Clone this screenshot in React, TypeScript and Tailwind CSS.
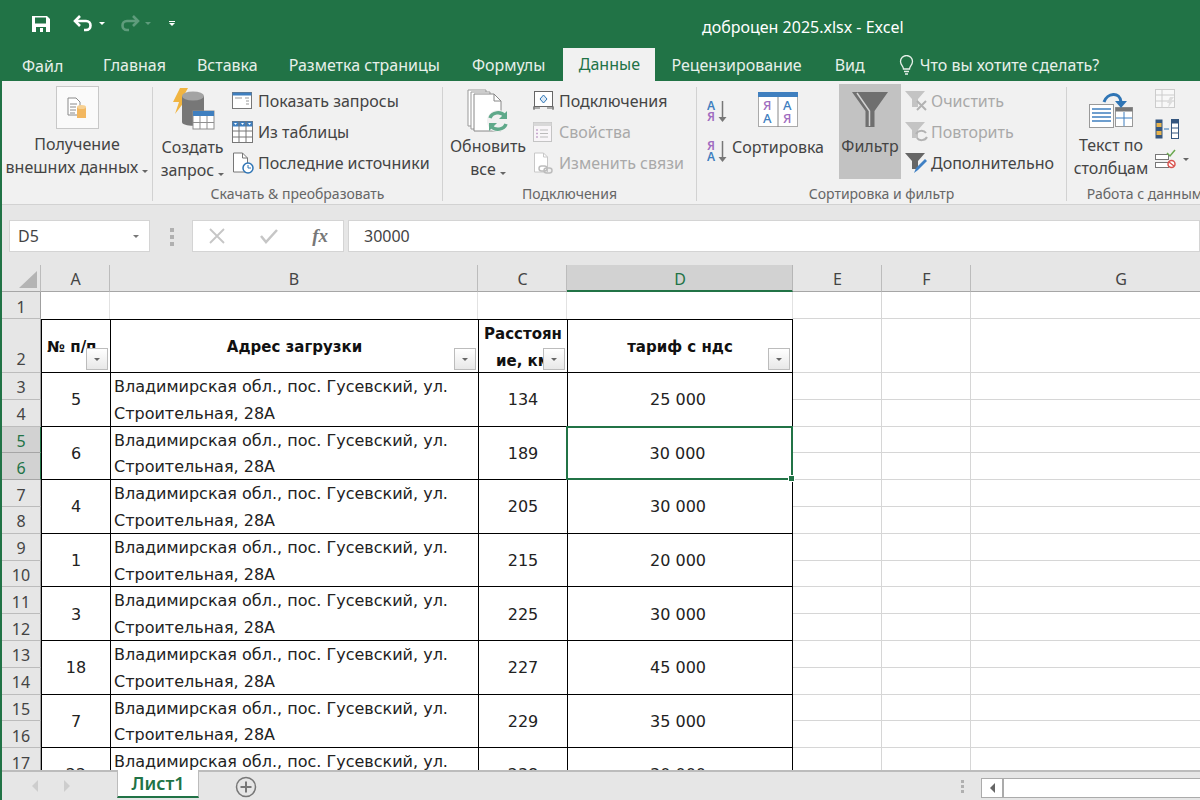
import type { ReactNode } from "react";

const rows = [
  { a: "5", c: "134", d: "25 000" },
  { a: "6", c: "189", d: "30 000" },
  { a: "4", c: "205", d: "30 000" },
  { a: "1", c: "215", d: "20 000" },
  { a: "3", c: "225", d: "30 000" },
  { a: "18", c: "227", d: "45 000" },
  { a: "7", c: "229", d: "35 000" },
  { a: "22", c: "238", d: "30 000" },
];

const Caret = ({ className = "border-t-[#666]" }: { className?: string }) => (
  <span className={`inline-block w-0 h-0 border-x-[3px] border-x-transparent border-t-[3px] ${className}`} />
);

const SaveIcon = () => (
  <svg width="18" height="18" viewBox="0 0 18 18">
    <path d="M0 1h15l3 3v13H0z" fill="#fff" />
    <rect x="3" y="2.5" width="11" height="6" fill="#217346" />
    <rect x="4" y="12" width="10" height="5" fill="#217346" />
    <rect x="8" y="13" width="3" height="4" fill="#fff" />
  </svg>
);

const UndoIcon = ({ stroke, flip }: { stroke: string; flip?: boolean }) => (
  <svg width="21" height="19" viewBox="0 0 21 19" className={flip ? "-scale-x-100" : ""}>
    <path d="M7 2 2 7l5 5" fill="none" stroke={stroke} strokeWidth="2.6" />
    <path d="M3 7h10c6 0 6 9 0 9h-2" fill="none" stroke={stroke} strokeWidth="2.6" />
  </svg>
);

const ExternalDataIcon = () => (
  <div className="w-[43px] h-[43px] bg-[#fafafa] border border-[#c8c8c8] flex items-center justify-center">
    <svg width="20" height="22" viewBox="0 0 20 22">
      <path d="M1 1h8l4 4v13H1z" fill="#fff" stroke="#8a8a8a" />
      <path d="M3 7h7M3 10h6M3 13h6M3 16h5" stroke="#8a8a8a" />
      <rect x="10" y="10" width="9" height="11" fill="#f2b760" />
      <ellipse cx="14.5" cy="10" rx="4.5" ry="2" fill="#f7d193" />
    </svg>
  </div>
);

const QueryIcon = () => (
  <svg width="46" height="42" viewBox="0 0 46 42">
    <path d="M10 0h8l-5 9h5L5 26l4-12H3z" fill="#f0b441" />
    <path d="M12 8h22v26c0 5-22 5-22 0z" fill="#777" />
    <ellipse cx="23" cy="8" rx="11" ry="4.5" fill="#a3a3a3" />
    <rect x="23" y="23" width="21" height="18" fill="#fff" stroke="#8f8f8f" />
    <rect x="23" y="23" width="21" height="5" fill="#3f7fbf" />
    <path d="M30 28v13M37 28v13M23 34.5h21" stroke="#8f8f8f" />
  </svg>
);

const ShowQueriesIcon = () => (
  <svg width="21" height="20" viewBox="0 0 21 20">
    <rect x="0.5" y="1.5" width="19" height="16" fill="#fff" stroke="#777" />
    <rect x="0.5" y="1.5" width="19" height="3" fill="#3f7fbf" />
    <path d="M3 7h7M13 7h4M3 10h0M14 10h3M14 13h3" stroke="#999" />
  </svg>
);

const FromTableIcon = () => (
  <svg width="22" height="22" viewBox="0 0 22 22">
    <rect x="0.5" y="0.5" width="20" height="21" fill="#fff" stroke="#777" />
    <rect x="0.5" y="0.5" width="20" height="5" fill="#3f7fbf" />
    <path d="M7 0v22M14 0v22M0 10h21M0 16h21" stroke="#777" />
    <path d="M2 2h3l-1.500 2zM9 2h3l-1.500 2zM16 2h3l-1.500 2z" fill="#fff" />
  </svg>
);

const RecentIcon = () => (
  <svg width="22" height="22" viewBox="0 0 22 22">
    <path d="M1.500 1h9l5 5v14h-14z" fill="#fff" stroke="#777" />
    <path d="M10.500 1v5h5" fill="none" stroke="#777" />
    <circle cx="16" cy="16" r="5" fill="#fff" stroke="#2f75b5" strokeWidth="1.500" />
    <path d="M16 13v3h3" fill="none" stroke="#2f75b5" />
  </svg>
);

const RefreshIcon = () => (
  <svg width="43" height="44" viewBox="0 0 43 44">
    <path d="M1 1h18v36H1z" fill="#fff" stroke="#999" />
    <path d="M4 3h19v37H4z" fill="#fff" stroke="#999" />
    <path d="M7 5h20l7 7v30H7z" fill="#fff" stroke="#888" />
    <path d="M27 5v7h7" fill="none" stroke="#888" />
    <circle cx="31" cy="32" r="11" fill="#f1f1f1" />
    <path d="M23 29c2-6 11-7 15-2M39 35c-2 6-11 7-15 2" fill="none" stroke="#5fa98a" strokeWidth="3.500" />
    <path d="M40 22v8h-8zM22 42v-8h8z" fill="#5fa98a" />
  </svg>
);

const ConnectionsIcon = () => (
  <svg width="21" height="20" viewBox="0 0 21 20">
    <rect x="1.500" y="0.500" width="18" height="15" fill="#fff" stroke="#666" />
    <path d="M0 17h7M14 17h7M1 15v4M20 15v4" stroke="#666" />
    <path d="M10.500 4 14 8l-3.500 4L7 8z" fill="#dbe9f6" stroke="#2f75b5" />
  </svg>
);

const PropertiesIcon = () => (
  <svg width="19" height="20" viewBox="0 0 19 20">
    <rect x="0.500" y="0.500" width="18" height="19" fill="#f8f5f8" stroke="#c4c4c4" />
    <rect x="0.500" y="0.500" width="18" height="3.500" fill="#d8d8d8" />
    <path d="M3 8h2M3 11.500h2M3 15h2" stroke="#c6a9cd" strokeWidth="1.500" />
    <path d="M7 8h8M7 11.500h8M7 15h8" stroke="#bbb" />
  </svg>
);

const EditLinksIcon = () => (
  <svg width="21" height="22" viewBox="0 0 21 22">
    <path d="M1.500 1h9l4 4v15h-13z" fill="#fff" stroke="#c8c8c8" />
    <path d="M10.500 1v4h4" fill="none" stroke="#c8c8c8" />
    <rect x="6" y="14" width="8" height="5" rx="2.500" fill="none" stroke="#bdbdbd" strokeWidth="1.500" />
    <rect x="11" y="16" width="8" height="5" rx="2.500" fill="none" stroke="#bdbdbd" strokeWidth="1.500" />
  </svg>
);

const SortIcon = ({ top, bottom, topColor, bottomColor }: { top: string; bottom: string; topColor: string; bottomColor: string }) => (
  <svg width="21" height="24" viewBox="0 0 21 24" fontFamily="'Noto Sans', sans-serif" fontWeight="600" fontSize="12">
    <text x="0" y="10" fill={topColor}>{top}</text>
    <text x="0" y="21" fill={bottomColor}>{bottom}</text>
    <path d="M15.500 1v19" stroke="#777" strokeWidth="1.500" />
    <path d="M11.500 17h8l-4 5z" fill="#777" />
  </svg>
);

const SortBigIcon = () => (
  <svg width="40" height="36" viewBox="0 0 40 36" fontFamily="'Noto Sans', sans-serif" fontWeight="500" fontSize="13">
    <rect x="0.500" y="0.500" width="39" height="34" fill="#fff" stroke="#aaa" />
    <rect x="0" y="0" width="40" height="5" fill="#3f7fbf" />
    <path d="M20 5v30" stroke="#888" />
    <text x="5" y="18" fill="#a06cc0">Я</text>
    <text x="5" y="31" fill="#3f7fbf">А</text>
    <text x="25" y="18" fill="#3f7fbf">А</text>
    <text x="25" y="31" fill="#a06cc0">Я</text>
  </svg>
);

const FilterBigIcon = () => (
  <svg width="36" height="35" viewBox="0 0 36 35">
    <path d="M0 0h36L22.500 19v16h-9V19z" fill="#6f6f6f" />
    <path d="M5 1 17.500 19v15" fill="none" stroke="#d2d2d2" strokeWidth="1.500" />
  </svg>
);

const SmallFunnel = ({ fill }: { fill: string }) => (
  <path d="M0 1h20l-7 8v8H7V9z" fill={fill} />
);

const ClearFilterIcon = () => (
  <svg width="23" height="22" viewBox="0 0 23 22">
    <SmallFunnel fill="#c4c4c4" />
    <path d="M12 11l9 9M21 11l-9 9" stroke="#b2b2b2" strokeWidth="2" />
  </svg>
);

const ReapplyIcon = () => (
  <svg width="23" height="22" viewBox="0 0 23 22">
    <SmallFunnel fill="#c4c4c4" />
    <path d="M11 13c2-4 8-4 10-1M22 16c-2 4-8 4-10 1" fill="none" stroke="#b2b2b2" strokeWidth="2" />
  </svg>
);

const AdvancedIcon = () => (
  <svg width="23" height="22" viewBox="0 0 23 22">
    <SmallFunnel fill="#666" />
    <path d="M9 21l2-5 9-9 2 2-9 9z" fill="#3f80c4" />
  </svg>
);

const TextColumnsIcon = () => (
  <svg width="44" height="36" viewBox="0 0 44 36">
    <rect x="0.500" y="12.500" width="24" height="23" fill="#fff" stroke="#999" />
    <path d="M3 17h19M3 21h19M3 25h19M3 29h19" stroke="#3f7fbf" strokeWidth="1.500" />
    <rect x="26.500" y="15.500" width="17" height="19" fill="#fff" stroke="#999" />
    <rect x="26.500" y="15.500" width="17" height="4" fill="#777" />
    <path d="M35 20v14M27 26h16" stroke="#3f7fbf" />
    <path d="M15 10C18 1 31 -1 32 10" fill="none" stroke="#2f75b5" strokeWidth="3" />
    <path d="M26 9h12l-6 7z" fill="#2f75b5" />
  </svg>
);

const FlashFillIcon = () => (
  <svg width="21" height="20" viewBox="0 0 21 20">
    <rect x="0.500" y="0.500" width="19" height="18" fill="#f8f8f8" stroke="#ccc" />
    <path d="M0 6h20M0 12h20M7 0v19" stroke="#ccc" />
    <path d="M15 8h4l-3 4h2l-5 7 1-5h-2z" fill="#ddd" />
  </svg>
);

const DuplicatesIcon = () => (
  <svg width="24" height="20" viewBox="0 0 24 20">
    <rect x="0.500" y="0.500" width="7" height="19" fill="#35567f" />
    <rect x="1.500" y="4" width="5" height="4" fill="#e9b44c" />
    <rect x="1.500" y="12" width="5" height="4" fill="#e9b44c" />
    <rect x="16.500" y="0.500" width="7" height="19" fill="#fff" stroke="#35567f" />
    <rect x="16.500" y="0.500" width="7" height="4" fill="#35567f" />
    <path d="M17 9h6M17 14h6" stroke="#35567f" />
    <path d="M9 10h5" stroke="#2f75b5" />
  </svg>
);

const ValidationIcon = () => (
  <svg width="22" height="20" viewBox="0 0 22 20">
    <rect x="0.500" y="5.500" width="13" height="5" fill="#fff" stroke="#777" />
    <rect x="0.500" y="13.500" width="13" height="5" fill="#fff" stroke="#777" />
    <path d="M12 4l3 3 5-6" fill="none" stroke="#6aa84f" strokeWidth="1.500" />
    <circle cx="16.500" cy="15" r="3.500" fill="#fff" stroke="#d9534f" strokeWidth="1.500" />
    <path d="M14 13l5 4" stroke="#d9534f" strokeWidth="1.500" />
  </svg>
);

const Group = ({ label, className, children }: { label: string; className: string; children: ReactNode }) => (
  <div className={`flex flex-col shrink-0 ${className}`}>
    <div className="h-[98px] flex">{children}</div>
    <div className="h-[22px] pt-px text-[14px] leading-[22px] text-[#666] text-center whitespace-nowrap">{label}</div>
  </div>
);

const Separator = () => <div className="w-px h-[114px] mt-[2px] bg-[#d2d2d2] shrink-0" />;

const SmallButton = ({ icon, label, disabled }: { icon: ReactNode; label: string; disabled?: boolean }) => (
  <div className={`h-[31px] flex items-center whitespace-nowrap ${disabled ? "text-[#a9a9a9]" : "text-[#444]"}`}>
    <span className="w-[26px] flex items-center">{icon}</span>
    <span>{label}</span>
  </div>
);

const HeaderCell = ({ label, selected, className = "" }: { label: string; selected?: boolean; className?: string }) => (
  <div
    className={`flex items-center justify-center pt-[2px] pl-[1px] text-[16px] border-r border-b ${
      selected ? "bg-[#d2d2d2] text-[#217346] border-r-[#b6b6b6] border-b-2 border-b-[#217346]" : "bg-[#e6e6e6] text-[#444] border-r-[#bcbcbc] border-b-[#a6a6a6]"
    } ${className}`}
  >
    {label}
  </div>
);

const RowHead = ({ n }: { n: number }) => {
  const selected = n === 5 || n === 6;
  return (
    <div
      className={`flex items-center justify-center pt-[3px] text-[16px] border-r border-b col-start-1 ${
        selected ? "bg-[#d2d2d2] text-[#217346] border-b-[#a6a6a6] border-r-[#217346]" : "bg-[#e6e6e6] text-[#444] border-b-[#bcbcbc] border-r-[#9f9f9f]"
      }`}
    >
      {n}
    </div>
  );
};

const Plain = () => <div className="border-r border-b border-[#d6d6d6]" />;

const FilterButton = () => (
  <span className="absolute bottom-[2px] right-[2px] w-[22px] h-[22px] bg-gradient-to-b from-white to-[#e8e8e8] border border-[#bcbcbc] flex items-center justify-center">
    <Caret className="border-t-[#666]" />
  </span>
);

export default function App() {
  return (
    <div className="w-[1200px] h-[800px] flex flex-col overflow-hidden border-l-2 border-[#217346] bg-white font-['Noto_Sans',sans-serif]">
      <div className="h-[47px] shrink-0 bg-[#217346] flex items-center text-white">
        <div className="ml-[30px]"><SaveIcon /></div>
        <div className="ml-[23px]"><UndoIcon stroke="#fff" /></div>
        <div className="ml-[5px] flex"><Caret className="border-t-white" /></div>
        <div className="ml-[14px]"><UndoIcon stroke="#5f9c7c" flip /></div>
        <div className="ml-[5px] flex"><Caret className="border-t-[#5f9c7c]" /></div>
        <div className="ml-[18px] flex flex-col items-center gap-[1px]">
          <span className="w-[6px] h-px bg-white" />
          <Caret className="border-t-white" />
        </div>
        <div className="ml-[527px] pt-[6px] text-[16px] whitespace-nowrap">доброцен 2025.xlsx - Excel</div>
      </div>

      <div className="h-[34px] shrink-0 bg-[#217346] flex items-stretch text-[16px] text-[#e7f0ea] whitespace-nowrap">
        <div className="ml-[20px] w-[40px] pt-[7px]">Файл</div>
        <div className="ml-[41px] pt-[6px]">Главная</div>
        <div className="ml-[31px] pt-[6px]">Вставка</div>
        <div className="ml-[31px] pt-[6px]">Разметка страницы</div>
        <div className="ml-[32px] pt-[6px]">Формулы</div>
        <div className="ml-[18px] w-[92px] mt-px bg-[#f1f1f1] text-[#217346] text-center pt-[4px]">Данные</div>
        <div className="ml-[16px] pt-[6px]">Рецензирование</div>
        <div className="ml-[33px] pt-[6px]">Вид</div>
        <div className="ml-[33px] pt-[8px]">
          <svg width="17" height="20" viewBox="0 0 17 20" fill="none" stroke="#e7f0ea" strokeWidth="1.300">
            <path d="M5.500 14c0-3-3-4-3-7.500a6 6 0 0 1 12 0c0 3.500-3 4.500-3 7.500z" />
            <path d="M6 16.500h5M7 19h3" />
          </svg>
        </div>
        <div className="ml-[5px] pt-[6px]">Что вы хотите сделать?</div>
      </div>

      <div className="h-[124px] shrink-0 bg-[#f1f1f1] border-b border-[#d2d2d2] flex pt-[4px] text-[16px] text-[#444]">
        <Group label="" className="w-[150px]">
          <div className="w-full flex flex-col items-center pt-px">
            <ExternalDataIcon />
            <div className="mt-[4px] leading-[23px] text-center whitespace-nowrap">
              <div>Получение</div>
              <div>внешних данных <Caret /></div>
            </div>
          </div>
        </Group>
        <Separator />
        <Group label="Скачать & преобразовать" className="w-[289px]">
          <div className="w-[79px] flex flex-col items-center pt-[3px]">
            <QueryIcon />
            <div className="mt-[6px] leading-[23px] text-center whitespace-nowrap">
              <div>Создать</div>
              <div>запрос <Caret /></div>
            </div>
          </div>
          <div className="flex flex-col">
            <SmallButton icon={<ShowQueriesIcon />} label="Показать запросы" />
            <SmallButton icon={<FromTableIcon />} label="Из таблицы" />
            <SmallButton icon={<RecentIcon />} label="Последние источники" />
          </div>
        </Group>
        <Separator />
        <Group label="Подключения" className="w-[253px]">
          <div className="w-[90px] flex flex-col items-center pt-[4px]">
            <RefreshIcon />
            <div className="mt-[2px] leading-[23px] text-center whitespace-nowrap">
              <div>Обновить</div>
              <div>все <Caret /></div>
            </div>
          </div>
          <div className="flex flex-col">
            <SmallButton icon={<ConnectionsIcon />} label="Подключения" />
            <SmallButton icon={<PropertiesIcon />} label="Свойства" disabled />
            <SmallButton icon={<EditLinksIcon />} label="Изменить связи" disabled />
          </div>
        </Group>
        <Separator />
        <Group label="Сортировка и фильтр" className="w-[369px]">
          <div className="w-[31px] pl-[10px] flex flex-col pt-[15px] gap-[16px] shrink-0">
            <SortIcon top="А" bottom="Я" topColor="#3f7fbf" bottomColor="#a06cc0" />
            <SortIcon top="Я" bottom="А" topColor="#a06cc0" bottomColor="#3f7fbf" />
          </div>
          <div className="w-[100px] flex flex-col items-center pt-[7px] shrink-0">
            <SortBigIcon />
            <div className="mt-[8px] leading-[23px] whitespace-nowrap">Сортировка</div>
          </div>
          <div className="ml-[11px] w-[62px] h-[95px] -mt-px bg-[#c2c2c2] flex flex-col items-center pt-[8px] shrink-0">
            <FilterBigIcon />
            <div className="mt-[8px] leading-[23px]">Фильтр</div>
          </div>
          <div className="flex flex-col ml-[4px]">
            <SmallButton icon={<ClearFilterIcon />} label="Очистить" disabled />
            <SmallButton icon={<ReapplyIcon />} label="Повторить" disabled />
            <SmallButton icon={<AdvancedIcon />} label="Дополнительно" />
          </div>
        </Group>
        <Separator />
        <Group label="Работа с данными" className="w-[164px]">
          <div className="w-[88px] flex flex-col items-center pt-[7px] shrink-0">
            <TextColumnsIcon />
            <div className="mt-[6px] leading-[23px] text-center whitespace-nowrap">
              <div>Текст по</div>
              <div>столбцам</div>
            </div>
          </div>
          <div className="flex flex-col gap-[10px] pt-[4px]">
            <FlashFillIcon />
            <DuplicatesIcon />
            <div className="flex items-center gap-[6px]">
              <ValidationIcon />
              <Caret />
            </div>
          </div>
        </Group>
      </div>

      <div className="h-[60px] shrink-0 bg-[#e6e6e6] flex items-start pt-[15px]">
        <div className="ml-[7px] w-[141px] h-[32px] bg-white border border-[#d4d4d4] flex items-center justify-between pl-[8px] pr-[10px] text-[16px] text-[#444]">
          D5
          <Caret className="border-t-[#777]" />
        </div>
        <div className="ml-[20px] mt-[8px] flex flex-col gap-[3px]">
          <span className="w-[4px] h-[4px] bg-[#b0b0b0]" />
          <span className="w-[4px] h-[4px] bg-[#b0b0b0]" />
          <span className="w-[4px] h-[4px] bg-[#b0b0b0]" />
        </div>
        <div className="ml-[18px] w-[152px] h-[32px] bg-white border border-[#d4d4d4] flex items-center justify-between pl-[16px] pr-[15px]">
          <svg width="16" height="16" viewBox="0 0 16 16" stroke="#c6c6c6" strokeWidth="1.800"><path d="M1 1l14 14M15 1 1 15" /></svg>
          <svg width="18" height="15" viewBox="0 0 18 15" fill="none" stroke="#c6c6c6" strokeWidth="2.500"><path d="M1 7l5 6L17 1" /></svg>
          <span className="font-['Liberation_Serif',serif] italic font-bold text-[19px] text-[#777]">fx</span>
        </div>
        <div className="ml-[4px] flex-1 h-[32px] bg-white border border-[#d4d4d4] flex items-center pl-[15px] text-[16px] text-[#444]">
          30000
        </div>
      </div>

      <div className="flex-1 min-h-0 overflow-hidden">
        <div className="grid w-[1280px] grid-cols-[39px_69px_368px_89px_226px_89px_89px_300px] grid-rows-[27px_27px_54px_repeat(16,26.8px)]">
          <div className="bg-[#e6e6e6] border-r border-b border-r-[#bcbcbc] border-b-[#a6a6a6] flex items-end justify-end pr-[3px] pb-[3px]">
            <span className="w-0 h-0 border-l-[18px] border-l-transparent border-b-[17px] border-b-[#b4b4b4]" />
          </div>
          <HeaderCell label="A" />
          <HeaderCell label="B" />
          <HeaderCell label="C" />
          <HeaderCell label="D" selected />
          <HeaderCell label="E" />
          <HeaderCell label="F" />
          <HeaderCell label="G" />

          <RowHead n={1} />
          <div className="border-r border-[#e2e2e2]" />
          <div className="border-r border-[#e2e2e2]" />
          <div className="border-r border-[#e2e2e2]" />
          <div className="border-r border-[#e2e2e2]" />
          <Plain />
          <Plain />
          <Plain />

          <div className="col-start-1 bg-[#e6e6e6] border-r border-b border-b-[#bcbcbc] border-r-[#9f9f9f] flex items-end justify-center pb-[1px] text-[16px] text-[#444]">2</div>
          <div className="relative border-l border-y border-black flex items-center pl-[5px] pt-[3px] text-[15px] font-['DejaVu_Sans',sans-serif] font-bold whitespace-nowrap overflow-hidden text-[#111]">
            № п/п
            <FilterButton />
          </div>
          <div className="relative border-l border-y border-black flex items-center justify-center pt-[3px] text-[15px] font-['DejaVu_Sans',sans-serif] font-bold text-[#111]">
            Адрес загрузки
            <FilterButton />
          </div>
          <div className="relative border-l border-y border-black text-center pt-px text-[15px] leading-[27px] font-['DejaVu_Sans',sans-serif] font-bold whitespace-nowrap overflow-hidden text-[#111]">
            <div>Расстоян</div>
            <div>ие, км</div>
            <FilterButton />
          </div>
          <div className="relative border-x border-y border-black flex items-center justify-center pt-[3px] text-[15px] font-['DejaVu_Sans',sans-serif] font-bold text-[#111]">
            тариф с ндс
            <FilterButton />
          </div>
          <Plain />
          <Plain />
          <Plain />

          {rows.map((row, i) => (
            <div key={i} className="contents">
              <RowHead n={3 + i * 2} />
              <div className="row-span-2 border-l border-b border-black flex items-center justify-center pt-[2px] text-[16px] font-['DejaVu_Sans',sans-serif] text-[#222]">{row.a}</div>
              <div className="row-span-2 border-l border-b border-black pl-[3px] pt-px text-[16px] font-['DejaVu_Sans',sans-serif] leading-[26.8px] whitespace-nowrap text-[#222]">
                <div>Владимирская обл., пос. Гусевский, ул.</div>
                <div>Строительная, 28А</div>
              </div>
              <div className="row-span-2 border-l border-b border-black flex items-center justify-center pt-[2px] text-[16px] font-['DejaVu_Sans',sans-serif] text-[#222]">{row.c}</div>
              {i === 1 ? (
                <div className="relative z-10 row-span-2 -ml-px -mt-px border-2 border-[#217346] flex items-center justify-center pt-[2px] pr-[4px] text-[16px] font-['DejaVu_Sans',sans-serif] text-[#222]">
                  {row.d}
                  <span className="absolute -right-[4px] -bottom-[4px] w-[7px] h-[7px] bg-[#217346] border border-white" />
                </div>
              ) : (
                <div className="row-span-2 border-x border-b border-black flex items-center justify-center pt-[2px] pr-[4px] text-[16px] font-['DejaVu_Sans',sans-serif] text-[#222]">{row.d}</div>
              )}
              <Plain />
              <Plain />
              <Plain />
              <RowHead n={4 + i * 2} />
              <Plain />
              <Plain />
              <Plain />
            </div>
          ))}
        </div>
      </div>

      <div className="relative z-20 h-[30px] shrink-0 bg-[#e6e6e6] border-t-2 border-[#bcbcbc] flex items-start">
        <div className="ml-[30px] mt-[8px] w-0 h-0 border-y-[6px] border-y-transparent border-r-[6px] border-r-[#cdcdcd]" />
        <div className="ml-[26px] mt-[8px] w-0 h-0 border-y-[6px] border-y-transparent border-l-[6px] border-l-[#cdcdcd]" />
        <div className="ml-[47px] -mt-[2px] w-[82px] h-[28px] bg-white border-x border-[#bcbcbc] border-b-2 border-b-[#217346] text-center text-[18px] leading-[27px] font-semibold text-[#217346]">
          Лист1
        </div>
        <div className="ml-[36px] mt-[4px] flex">
          <svg width="22" height="22" viewBox="0 0 22 22" fill="none" stroke="#777" strokeWidth="1.500">
            <circle cx="11" cy="11" r="9.500" />
            <path d="M11 5.500v11M5.500 11h11" strokeWidth="2" />
          </svg>
        </div>
        <div className="ml-[704px] mt-[8px] flex flex-col gap-[2px]">
          <span className="w-[3px] h-[3px] bg-[#b0b0b0]" />
          <span className="w-[3px] h-[3px] bg-[#b0b0b0]" />
          <span className="w-[3px] h-[3px] bg-[#b0b0b0]" />
        </div>
        <div className="ml-[17px] mt-[6px] flex-1 h-[20px] flex">
          <div className="w-[22px] h-full bg-white border border-[#ababab] flex items-center justify-center">
            <span className="w-0 h-0 border-y-[5px] border-y-transparent border-r-[5px] border-r-[#666]" />
          </div>
          <div className="flex-1 bg-white border-y border-l border-[#ababab]" />
        </div>
      </div>
    </div>
  );
}
